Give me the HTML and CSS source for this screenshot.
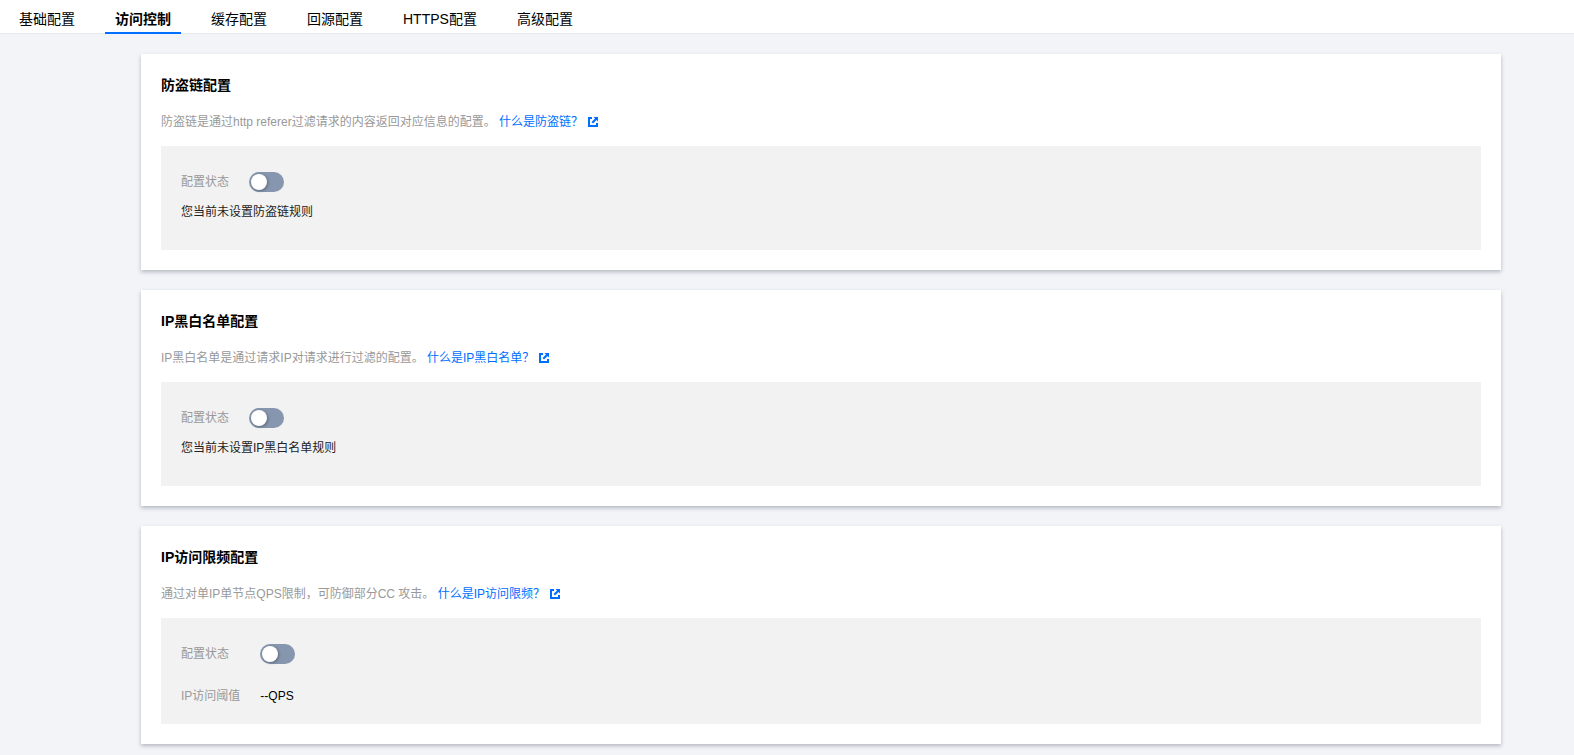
FILE: index.html
```html
<!DOCTYPE html>
<html lang="zh-CN">
<head>
    <meta charset="UTF-8">
    <meta name="viewport" content="width=device-width, initial-scale=1.0">
    <title>访问控制</title>
    <link rel="stylesheet" href="styles.css">
</head>
<body>
    <svg class="sprite" aria-hidden="true">
        <symbol id="icon-external" viewBox="0 0 20 20">
            <path d="M8 0H0v20h20v-8h-4v4H4V4h4z"/>
            <path d="M11 0h9v9l-3-3-7 7-3-3 7-7z"/>
        </symbol>
    </svg>

    <nav class="tabs">
        <a href="#" class="tab">基础配置</a>
        <a href="#" class="tab active" aria-current="page">访问控制</a>
        <a href="#" class="tab">缓存配置</a>
        <a href="#" class="tab">回源配置</a>
        <a href="#" class="tab">HTTPS配置</a>
        <a href="#" class="tab">高级配置</a>
    </nav>

    <main class="content">
        <section class="card">
            <h3>防盗链配置</h3>
            <p class="desc">
                防盗链是通过http referer过滤请求的内容返回对应信息的配置。
                <a href="#">什么是防盗链？<svg class="icon"><use href="#icon-external"/></svg></a>
            </p>
            <div class="panel">
                <div class="row">
                    <label for="referer-switch">配置状态</label>
                    <input type="checkbox" class="switch" id="referer-switch">
                </div>
                <p class="tip">您当前未设置防盗链规则</p>
            </div>
        </section>

        <section class="card">
            <h3>IP黑白名单配置</h3>
            <p class="desc">
                IP黑白名单是通过请求IP对请求进行过滤的配置。
                <a href="#">什么是IP黑白名单？<svg class="icon"><use href="#icon-external"/></svg></a>
            </p>
            <div class="panel">
                <div class="row">
                    <label for="ip-switch">配置状态</label>
                    <input type="checkbox" class="switch" id="ip-switch">
                </div>
                <p class="tip">您当前未设置IP黑白名单规则</p>
            </div>
        </section>

        <section class="card">
            <h3>IP访问限频配置</h3>
            <p class="desc">
                通过对单IP单节点QPS限制，可防御部分CC 攻击。
                <a href="#">什么是IP访问限频？<svg class="icon"><use href="#icon-external"/></svg></a>
            </p>
            <div class="panel panel-grid">
                <label for="qps-switch">配置状态</label>
                <input type="checkbox" class="switch" id="qps-switch">
                <span class="name">IP访问阈值</span>
                <span>--QPS</span>
            </div>
        </section>
    </main>
</body>
</html>
```

FILE: styles.css
```css
* {
    margin: 0;
    padding: 0;
    box-sizing: border-box;
}

body {
    background: #f2f4f8;
    color: #000;
    font-family: "Liberation Sans", "Noto Sans CJK SC", sans-serif;
    font-size: 12px;
    line-height: 20px;
}

a {
    color: #006eff;
    text-decoration: none;
}

.sprite {
    display: none;
}

.tabs {
    display: flex;
    gap: 20px;
    height: 34px;
    padding: 0 9px;
    background: #fff;
    border-bottom: 1px solid #e5e8ed;
}

.tab {
    height: 34px;
    padding: 0 10px;
    color: #000;
    font-size: 14px;
    line-height: 38px;
    white-space: nowrap;
}

.tab.active {
    font-weight: bold;
    border-bottom: 2px solid #006eff;
}

.content {
    display: flex;
    flex-direction: column;
    gap: 20px;
    padding: 20px 73px 10px 141px;
}

.card {
    padding: 20px;
    background: #fff;
    box-shadow: 0 2px 4px rgba(54, 58, 80, 0.32);
}

.card h3 {
    margin-bottom: 16px;
    font-size: 14px;
    line-height: 22px;
}

.desc {
    margin-bottom: 14px;
    color: #999;
}

.icon {
    width: 10px;
    height: 10px;
    margin-left: 5px;
    fill: currentColor;
    vertical-align: -1px;
}

.panel {
    padding: 21px 20px 23px;
    background: #f2f2f2;
    line-height: 30px;
}

.panel label,
.panel .name {
    color: #999;
}

.row {
    display: flex;
    align-items: center;
    gap: 20px;
    height: 30px;
}

.tip {
    color: #222;
}

.panel-grid {
    display: grid;
    grid-template-columns: max-content 1fr;
    align-items: center;
    gap: 12px 20px;
    padding-bottom: 13px;
}

/* toggle */
.switch {
    appearance: none;
    width: 35px;
    height: 20px;
    padding: 2px;
    border-radius: 10px;
    background: #8696ae;
    cursor: pointer;
}

.switch::before {
    content: "";
    display: block;
    width: 16px;
    height: 16px;
    border-radius: 50%;
    background: #fff;
    box-shadow: 1px 1px 3px rgba(0, 0, 0, 0.3);
}

.switch:checked {
    background: #006eff;
}

.switch:checked::before {
    margin-left: auto;
}
```
